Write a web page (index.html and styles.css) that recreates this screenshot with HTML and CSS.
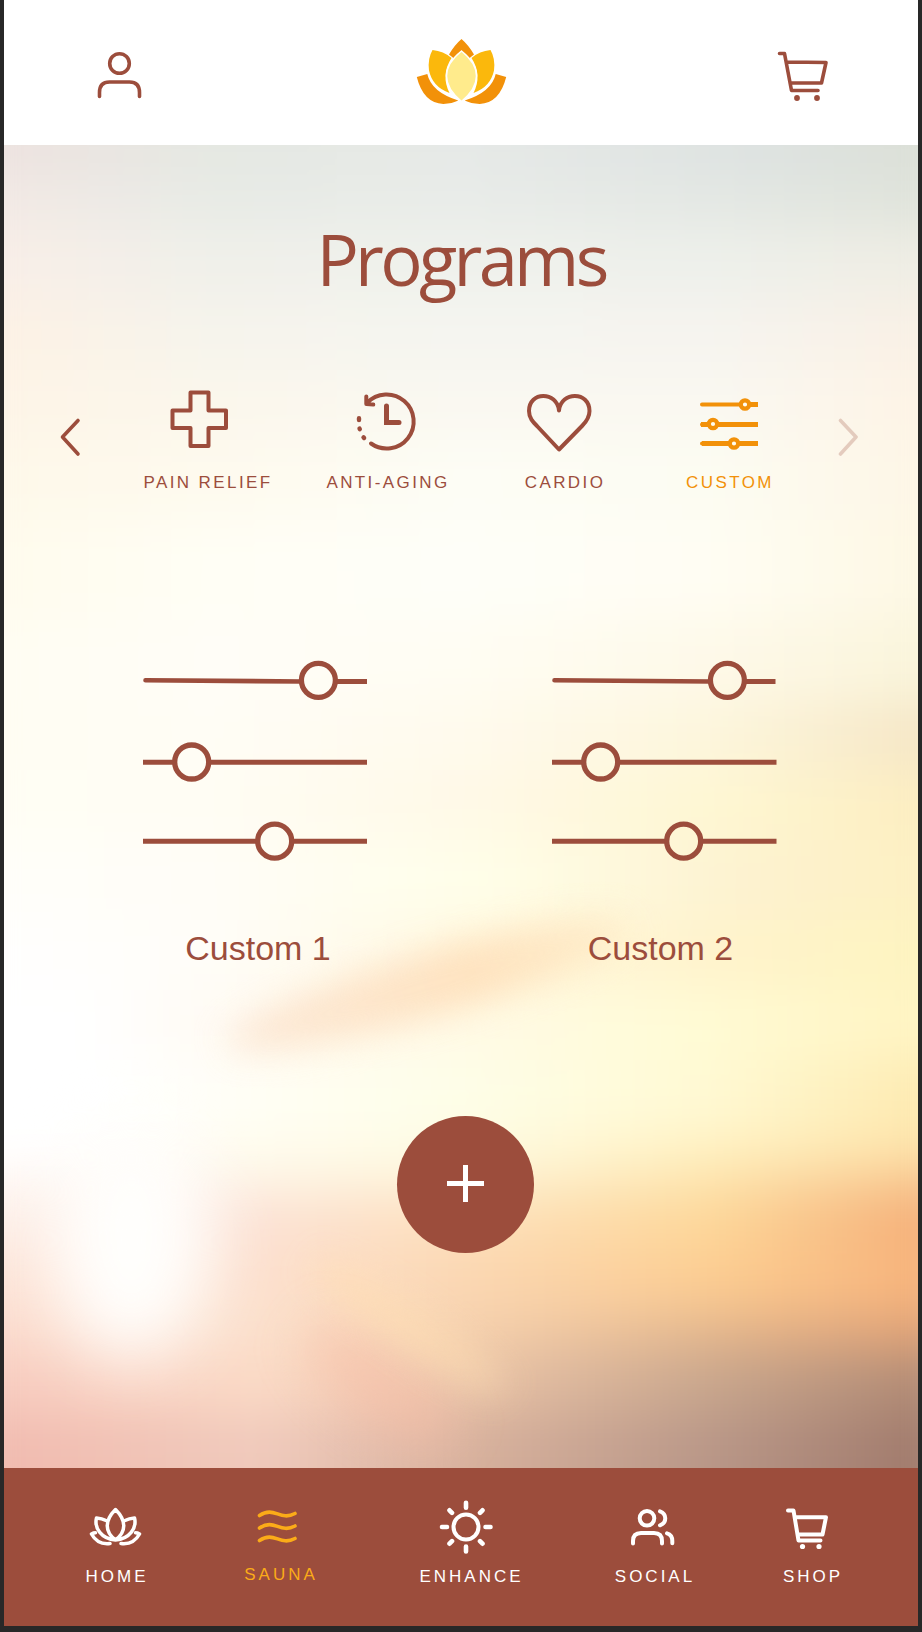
FILE: index.html
```html
<!DOCTYPE html>
<html lang="en">
<head>
<meta charset="utf-8">
<title>Programs</title>
<link rel="stylesheet" href="styles.css">
</head>
<body>
<div class="app">
  <header class="topbar">
    <svg class="line" width="54" height="60" viewBox="94 45 54 60"><circle cx="119.500" cy="63.500" r="9.800"/><path d="M99.500 96.500v-4q0-10.500 10-10.500h20q10 0 10 10.500v4"/></svg>
    <svg width="100" height="78" viewBox="412 33 100 78">
      <path fill="#f29109" d="M461.500 39q7 6 12.500 15.500l-5 4-7.500-7-7.500 7-5-4q5.500-9.500 12.500-15.500z"/>
      <path fill="#f29109" d="M416.800 77l10.500-3q4 18 31 26.500-6 3-15 3.500-20-1-26.500-27zM506.200 77l-10.500-3q-4 18-31 26.500 6 3 15 3.500 20-1 26.500-27z"/>
      <path fill="#fbb80c" d="M432.500 50q11 1 19 8-11 17-2 35-17-6-20.500-22.500-1.500-12 3.500-20.500zM490.500 50q-11 1-19 8 11 17 2 35 17-6 20.500-22.500 1.500-12-3.500-20.500z"/>
      <path fill="#ffeb8c" stroke="#fff" stroke-width="1.500" d="M461.500 51c-20 16-20 34 0 50.500 20-16.500 20-34.500 0-50.500z"/>
    </svg>
    <svg class="line" width="58" height="60" viewBox="776 45 58 60"><path d="M779.500 53.500h5l7 37h26.500M787 62l39 .5-4.500 20.500h-31"/><circle class="dot" cx="797" cy="98" r="2.900"/><circle class="dot" cx="817" cy="98" r="2.900"/></svg>
  </header>

  <main class="programs">
    <div class="sky">
      <div class="bands">
        <i class="b1"></i><i class="b2"></i><i class="b3"></i><i class="b4"></i><i class="b5"></i><i class="b6"></i><i class="b7"></i>
        <i class="b8"></i><i class="b9"></i><i class="b10"></i><i class="b11"></i><i class="b12"></i><i class="b13"></i><i class="b14"></i>
        <i class="b15"></i><i class="b16"></i><i class="b17"></i><i class="b18"></i><i class="b19"></i><i class="b20"></i><i class="b21"></i>
      </div>
      <i class="glow"></i><i class="streak"></i><i class="blush"></i><i class="streak-low"></i>
    </div>

    <h1 class="title">Programs</h1>

    <section class="categories">
      <svg class="line chevron" width="30" height="50" viewBox="55 412 30 50"><path d="M78 420.500L62.500 437 78 454"/></svg>
      <div class="category">
        <svg class="line" width="80" height="70" viewBox="167 385 80 70"><path stroke-width="4" d="M190.500 392.500h18v18h17.500v17.500h-17.500v18h-18v-18h-18v-17.500h18z"/></svg>
        <span>PAIN RELIEF</span>
      </div>
      <div class="category">
        <svg class="line" width="80" height="70" viewBox="347 385 80 70"><path stroke-width="4" d="M367 403A27 27 0 1 1 371 443.500M366.300 396.500v7.500l7 .5"/><path stroke-width="5" stroke-linejoin="miter" d="M386.500 406v16.500h12.500"/><path stroke-width="4.400" d="M359 418.300v1.800M359.500 428.500l.3.700M363.500 437.300l.6.700"/></svg>
        <span>ANTI-AGING</span>
      </div>
      <div class="category">
        <svg class="line" width="80" height="70" viewBox="524 385 80 70"><path stroke-width="4" d="M559 410.500C557 391 529 391 529 411C529 418 533 422 537 426L559 449.500L582 426C586 422 589.500 417 589.500 411C589.500 391 561 391 559 410.500z"/></svg>
        <span>CARDIO</span>
      </div>
      <div class="category active">
        <svg class="line" width="80" height="70" viewBox="689 385 80 70"><path stroke-width="4" d="M702 404.500h39M702 424.500h6M702 443.500h28"/><path stroke-width="5" stroke-linecap="butt" d="M749 404.500h9M701 424.500h8M717 424.500h41M702 443.500h28M738 443.500h20"/><g stroke-width="4.200" fill="#fffdf0"><circle cx="745" cy="404.500" r="4.200"/><circle cx="713" cy="424" r="4.200"/><circle cx="734" cy="443.500" r="4.200"/></g></svg>
        <span>CUSTOM</span>
      </div>
      <svg class="line chevron faded" width="30" height="50" viewBox="834 412 30 50"><path d="M840.500 420.500L856 437l-15.500 17"/></svg>
    </section>

    <section class="presets">
      <article class="preset first">
        <svg class="line" width="230" height="215" viewBox="140 655 230 215"><path stroke-width="4.600" d="M145.500 680.300L301 681.500"/><path stroke-width="5" stroke-linecap="butt" d="M336 681.500h31M143 762.300h31M208 762.300h159M143 841.300h114M291 841.300h76"/><g stroke-width="5.300"><circle cx="318.400" cy="680.300" r="17"/><circle cx="191.700" cy="762" r="17"/><circle cx="274.700" cy="841.200" r="17"/></g></svg>
        <span>Custom 1</span>
      </article>
      <article class="preset second">
        <svg class="line" width="230" height="215" viewBox="140 655 230 215"><path stroke-width="4.600" d="M145.500 680.300L301 681.500"/><path stroke-width="5" stroke-linecap="butt" d="M336 681.500h30.500M143 762.300h31M208 762.300h159.500M143 841.300h114M291 841.300h76.500"/><g stroke-width="5.300"><circle cx="318.400" cy="680.300" r="17"/><circle cx="191.700" cy="762" r="17"/><circle cx="274.700" cy="841.200" r="17"/></g></svg>
        <span>Custom 2</span>
      </article>
    </section>

    <button class="add" aria-label="Add program"><svg width="37" height="39" viewBox="0 0 37 39"><path stroke="#fff" stroke-width="5" d="M0 18.500h37M18.500 0v37"/></svg></button>
  </main>

  <nav class="tabs">
    <a class="tab">
      <svg class="line" width="80" height="66" viewBox="76 1494 80 66"><path stroke-width="3.500" d="M115.500 1509.500c-11 11-11 22 0 30.500c11-8.500 11-19.500 0-30.500zM106 1520.500q-4-2-9.500-2.500c-2.500 10 5 21 19 22c14-1 21.500-12 19-22q-5.500.5-9.500 2.500M95.500 1532.800q-2 0-4 1.200q6 11 18.500 9.500M135.500 1532.800q2 0 4 1.200q-6 11-18.500 9.500"/></svg>
      <span>HOME</span>
    </a>
    <a class="tab current">
      <svg class="line" width="80" height="66" viewBox="240 1494 80 66"><path d="M259.500 1515.500c15-10 20 6 35.500-2M259.500 1528c15-10 20 6 35.500-2M259.500 1540.500c15-10 20 6 35.500-2"/></svg>
      <span>SAUNA</span>
    </a>
    <a class="tab">
      <svg class="line" width="80" height="66" viewBox="430.500 1494 80 66"><g stroke-width="4"><circle cx="465.500" cy="1527" r="12.500"/><path stroke-width="4.600" d="M465.500 1502.700v5M465.500 1546.500v5M441.500 1527h5M485 1527h5M449 1510.300l2.500 2.500M482 1510.300l-2.500 2.500M449 1543.700l2.500-2.500M482 1543.700l-2.500-2.500"/></g></svg>
      <span>ENHANCE</span>
    </a>
    <a class="tab">
      <svg class="line" width="80" height="66" viewBox="614 1494 80 66"><path stroke-width="4" d="M633 1543.500v-2.500q0-8 8-8h13q8 0 8 8v2.500M660 1511.300c7 2.500 7 11.500 0 14M667 1533.300q5.300 1.500 5.300 7.500v2.500"/><circle stroke-width="4" cx="647" cy="1518.300" r="7.300"/></svg>
      <span>SOCIAL</span>
    </a>
    <a class="tab">
      <svg class="line" width="80" height="66" viewBox="772 1494 80 66"><path stroke-width="4" d="M788 1510.500h5.500l5 30h22M796 1517.200h30l-3.500 17.300h-24.500"/><circle class="dot" cx="802.500" cy="1546.500" r="2.600"/><circle class="dot" cx="819" cy="1546.500" r="2.600"/></svg>
      <span>SHOP</span>
    </a>
  </nav>
</div>
</body>
</html>
```
FILE: styles.css
```css
* { box-sizing: border-box; }
body { margin: 0; font-family: "Liberation Sans", Arial, sans-serif; color: #9c4d3c; background: #282828; }
.app { width: 922px; height: 1632px; padding: 0 4px 6px; background: #282828; overflow: hidden; }
.app > * { width: 914px; }
svg { display: block; flex: none; fill: none; }
.line { stroke: currentColor; stroke-width: 3.6; stroke-linecap: round; stroke-linejoin: round; }
.dot { fill: currentColor; stroke: none; }

.topbar { height: 145px; padding: 45px 84px 0 90px; display: flex; justify-content: space-between; align-items: flex-start; background: #fff; }
.topbar svg:nth-child(2) { margin-top: -12px; }

.programs { position: relative; height: 1323px; padding-top: 64px; overflow: hidden; isolation: isolate; }
.title { margin: 0 0 76px; height: 100px; text-align: center; font: 400 70.5px/100px "Open Sans", sans-serif; letter-spacing: -3.7px; }

.categories { display: grid; grid-template-columns: 62px 180px 180px 174px 156px 27px 30px; padding-left: 51px; height: 108px; }
.chevron { margin-top: 27px; }
.faded { grid-column: 7; opacity: .25; }
.category { display: flex; flex-direction: column; align-items: center; gap: 18px; }
.category span { padding-left: 2px; font-size: 17px; line-height: 20px; letter-spacing: 2.4px; white-space: nowrap; }
.active { color: #f29109; }

.presets { display: flex; gap: 179px; padding-left: 136px; margin-top: 162px; }
.preset { display: flex; flex-direction: column; align-items: center; gap: 58px; font-size: 34px; line-height: 40px; }
.first span { padding-left: 6px; }
.second span { padding-right: 7px; }

.add { display: grid; place-items: center; width: 137px; height: 137px; margin: 148px 0 0 393px; padding: 0; border: 0; border-radius: 50%; background: #9c4d3c; }

.tabs { display: grid; grid-template-columns: 164px 164px 217px 150px 166px; height: 158px; padding: 26px 0 0 30px; background: #9c4d3c; color: #fff; }
.tab { display: flex; flex-direction: column; align-items: center; gap: 7px; }
.tab span { padding-left: 2px; font-size: 17px; line-height: 20px; letter-spacing: 3px; }
.current { color: #fbab18; }
.current span { margin-top: -2px; }

/* Blurred sunset behind the content */
.sky { position: absolute; inset: 0; z-index: -1; overflow: hidden; background: #fffdf4; }
.sky i { display: block; }
.bands { position: absolute; inset: -60px -40px; display: flex; flex-direction: column; filter: blur(24px); }
.b1 { height: 90px; background: linear-gradient(90deg, #eee1df, #e5e8e2 25%, #e6e9e7 50%, #dde2e1 80%, #dbdfd5); }
.b2 { height: 55px; background: linear-gradient(90deg, #f4e9e5, #e8ebe6 25%, #e9ece9 50%, #e4e8e4 75%, #dfe3da); }
.b3 { height: 70px; background: linear-gradient(90deg, #faeee7, #f0f0ea 25%, #eff1ec 50%, #eef0eb 75%, #efede3); }
.b4 { height: 70px; background: linear-gradient(90deg, #fef1e4, #f6f4ec 25%, #f5f5f0 50%, #f6f4ef 75%, #faf0e4); }
.b5 { height: 70px; background: linear-gradient(90deg, #fef4e6, #fbf7ec 25%, #faf8f1 50%, #faf8f1 75%, #fef3e4); }
.b6 { height: 80px; background: linear-gradient(90deg, #fef8e9, #fefaee 25%, #fdfdf5 50%, #fcfcf2 75%, #fef5e4); }
.b7 { height: 100px; background: linear-gradient(90deg, #fffbec, #fffef5 25%, #fefef8 50%, #fffdf3 75%, #fdf7e2); }
.b8 { height: 80px; background: linear-gradient(90deg, #fffdf2, #fffdf7 25%, #fffdf3 50%, #fef9e9 75%, #f9f4d9); }
.b9 { height: 70px; background: linear-gradient(90deg, #fffdf2, #fffdf5 25%, #fffaed 50%, #fdf6dc 75%, #f4e4c3); }
.b10 { height: 70px; background: linear-gradient(90deg, #fffef4, #fffdf4 25%, #fff9e7 50%, #fef7d3 75%, #fcecbe); }
.b11 { height: 80px; background: linear-gradient(90deg, #fffefa, #fffdf7 25%, #fffee8 53%, #fdf2d0 78%, #fdf0c0); }
.b12 { height: 70px; background: linear-gradient(90deg, #fff, #fffdf8 25%, #fff8e0 50%, #fff3cc 75%, #fdf4be); }
.b13 { height: 70px; background: linear-gradient(90deg, #fff 12%, #fffaf1 28%, #fffae6 50%, #fffbd4 75%, #fff3c0); }
.b14 { height: 70px; background: linear-gradient(90deg, #fff 15%, #fffef6 28%, #fefee8 50%, #fff9d3 75%, #fde8ac); }
.b15 { height: 40px; background: linear-gradient(90deg, #fff 10%, #fffdf0 25%, #fffbe2 50%, #fff0c0 75%, #fde0a5); }
.b16 { height: 30px; background: linear-gradient(90deg, #fff8f4, #fdf1e7 25%, #fdf0d4 50%, #fde2ab 75%, #f6bc86); }
.b17 { height: 50px; background: linear-gradient(90deg, #fdf0ea, #fce1d4 30%, #fddfb9 52%, #fdd799 75%, #f3a974); }
.b18 { height: 60px; background: linear-gradient(90deg, #fde4d8, #fce0ce 30%, #fbd6b0 52%, #fccd92 75%, #f7b078); }
.b19 { height: 45px; background: linear-gradient(90deg, #fbdacd, #fbe1cd 30%, #f4cfac 52%, #e4b78e 75%, #df9f74); }
.b20 { height: 60px; background: linear-gradient(90deg, #f7cabf, #fbdac6 30%, #e7c1a6 52%, #c8a68d 75%, #ad8671); }
.b21 { flex: 1; background: linear-gradient(90deg, #f1b9ae, #f0cabc 30%, #d6b09c 52%, #b99788 75%, #9d7668); }
.glow { position: absolute; left: 45px; top: 975px; width: 165px; height: 240px; border-radius: 50%; background: #fffefc; filter: blur(34px); }
.streak { position: absolute; left: 215px; top: 808px; width: 420px; height: 64px; border-radius: 50%; background: linear-gradient(90deg, #fbe3cf, #fedbb4 60%, #feeac6); opacity: .75; filter: blur(17px); transform: rotate(-16deg); }
.streak-low { position: absolute; left: 290px; top: 1165px; width: 230px; height: 34px; border-radius: 50%; background: #ffdfb3; opacity: .65; filter: blur(17px); transform: rotate(34deg); }
.blush { position: absolute; left: 285px; top: 1205px; width: 180px; height: 70px; border-radius: 50%; background: #f9bda6; opacity: .5; filter: blur(24px); transform: rotate(38deg); }
```
